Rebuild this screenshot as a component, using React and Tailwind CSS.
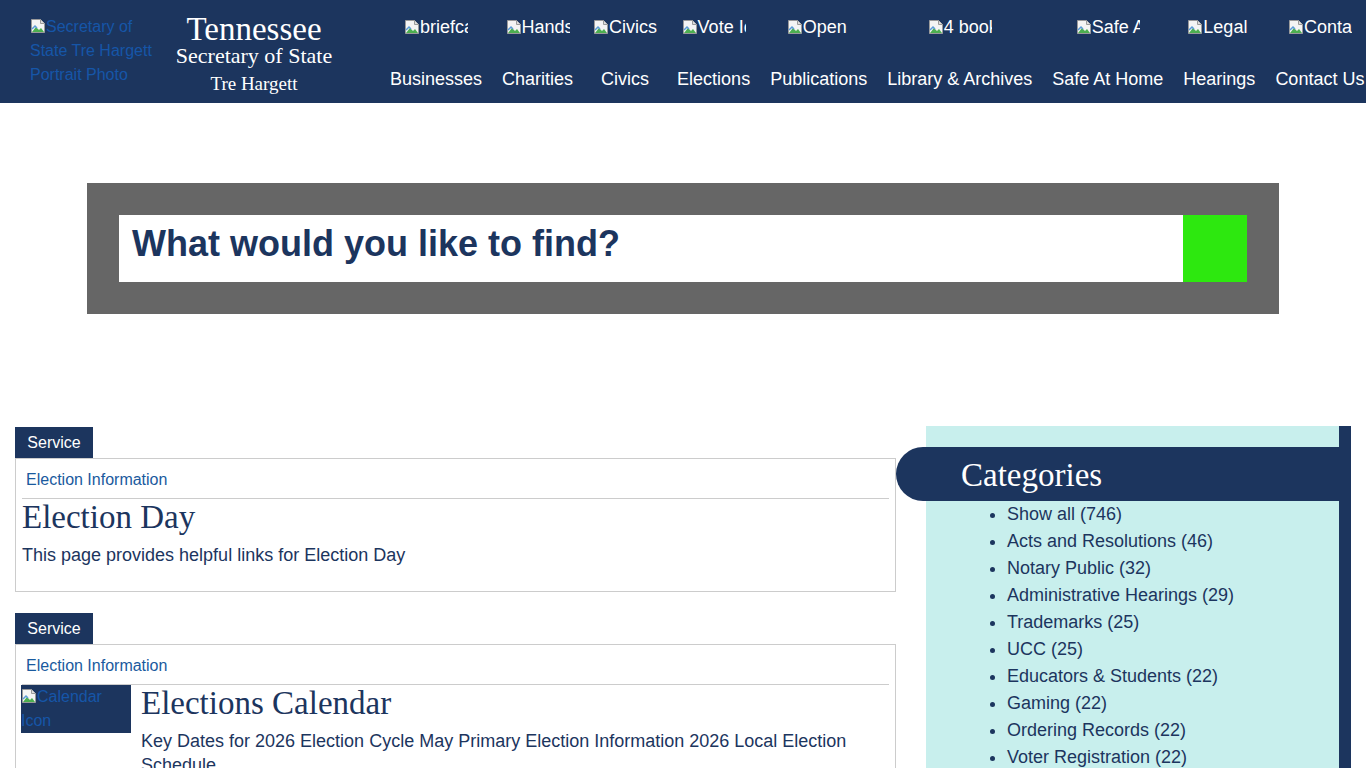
import React from 'react';

const navy = 'bg-[#1c355e]';

const BrokenIcon = () => (
  <svg width="16" height="16" viewBox="0 0 16 16" className="inline-block align-[-2px] shrink-0">
    <path d="M1.5 1.5h9l4 4v9h-13z" fill="#f4f4f4" stroke="#9a9a9a" />
    <path d="M10.5 1.5v4h4" fill="#ddd" stroke="#9a9a9a" />
    <path d="M2 14l4-5 3 3 2-2 3 4z" fill="#4caf50" />
    <path d="M2 11l3-3 2 2" fill="none" stroke="#5b9bd5" strokeWidth="1.5" />
  </svg>
);

const navItems = [
  { alt: 'briefcase', label: 'Businesses' },
  { alt: 'Handshake', label: 'Charities' },
  { alt: 'Civics', label: 'Civics' },
  { alt: 'Vote Icon', label: 'Elections' },
  { alt: 'Open book', label: 'Publications' },
  { alt: '4 books', label: 'Library & Archives' },
  { alt: 'Safe At Home', label: 'Safe At Home' },
  { alt: 'Legal', label: 'Hearings' },
  { alt: 'Contact', label: 'Contact Us' },
];

const categories = [
  'Show all (746)',
  'Acts and Resolutions (46)',
  'Notary Public (32)',
  'Administrative Hearings (29)',
  'Trademarks (25)',
  'UCC (25)',
  'Educators & Students (22)',
  'Gaming (22)',
  'Ordering Records (22)',
  'Voter Registration (22)',
  'Business Services (21)',
];

const Header = () => (
  <header className={`${navy} h-[103px] flex items-start text-white overflow-hidden`}>
    <div className="ml-[30px] mt-[15px] w-[125px] text-[16px] leading-[24px] text-[#1656a8]">
      <BrokenIcon />Secretary of State Tre Hargett Portrait Photo
    </div>
    <div className="ml-[18px] w-[162px] flex flex-col items-center font-['Liberation_Serif',serif] pt-[13px]">
      <div className="text-[33px] leading-[32px]">Tennessee</div>
      <div className="text-[22px] leading-[22px]">Secretary of State</div>
      <div className="text-[19px] leading-[22px] mt-[6px]">Tre Hargett</div>
    </div>
    <nav className="ml-[55px] flex gap-5 whitespace-nowrap">
      {navItems.map((n) => (
        <div key={n.label} className="flex flex-col items-center pt-[15px]">
          <div className="w-[64px] h-[26px] overflow-hidden text-[18px] leading-[24px] whitespace-nowrap">
            <BrokenIcon />{n.alt}
          </div>
          <div className="mt-[26px] text-[18px] leading-[24px]">{n.label}</div>
        </div>
      ))}
    </nav>
  </header>
);

const Search = () => (
  <div className="mx-[87px] mt-[80px] bg-[#666666] h-[131px] px-[32px] py-[32px] flex">
    <div className="flex-1 bg-white flex items-center pl-[13px] pb-[10px]">
      <span className="text-[36px] leading-[40px] font-bold text-[#1c355e]">What would you like to find?</span>
    </div>
    <div className="w-[64px] bg-[#2de80f]" />
  </div>
);

const Card = ({ title, desc, image }) => (
  <div>
    <div className={`${navy} w-[78px] h-[31px] flex items-center justify-center text-white text-[16px]`}>Service</div>
    <div className="border border-[#cccccc] px-[6px] pt-[11px] pb-[24px]">
      <div className="pb-[8px] border-b border-[#cccccc]">
        <div className="ml-[4px] text-[16px] leading-[20px] text-[#1a5a9e]">Election Information</div>
      </div>
      {image ? (
        <div className="flex">
          <div className={`${navy} -ml-[1px] w-[110px] h-[48px] shrink-0 text-[16px] leading-[24px] text-[#1656a8] overflow-hidden`}>
            <BrokenIcon />Calendar Icon
          </div>
          <div className="ml-[10px]">
            <h2 className="font-['Liberation_Serif',serif] text-[33px] leading-[36px] text-[#1c355e]">{title}</h2>
            <p className="text-[18px] leading-[24px] mt-[8px] text-[#1c355e]">{desc}</p>
          </div>
        </div>
      ) : (
        <>
          <h2 className="font-['Liberation_Serif',serif] text-[33px] leading-[36px] text-[#1c355e]">{title}</h2>
          <p className="text-[18px] leading-[24px] mt-[8px] text-[#1c355e]">{desc}</p>
        </>
      )}
    </div>
  </div>
);

export default function App() {
  return (
    <div className="min-h-screen bg-white font-['Liberation_Sans',Arial,sans-serif]">
      <Header />
      <Search />
      <div className="flex mt-[112px] pl-[15px]">
        <div className="w-[881px] pt-[1px] flex flex-col gap-[21px]">
          <Card title="Election Day" desc="This page provides helpful links for Election Day" />
          <Card
            image
            title="Elections Calendar"
            desc="Key Dates for 2026 Election Cycle May Primary Election Information 2026 Local Election Schedule"
          />
        </div>
        <aside className="ml-[30px] w-[425px] bg-[#c8efed] border-r-[12px] border-[#1c355e] pt-[21px] pb-[20px]">
          <div className={`${navy} -ml-[30px] h-[54px] rounded-l-full flex items-center pl-[65px]`}>
            <span className="font-['Liberation_Serif',serif] text-[33px] leading-[40px] mt-[2px] text-white">Categories</span>
          </div>
          <ul className="list-disc pl-[81px] text-[18px] leading-[27px] text-[#1c355e]">
            {categories.map((c) => (
              <li key={c}>{c}</li>
            ))}
          </ul>
        </aside>
      </div>
    </div>
  );
}
